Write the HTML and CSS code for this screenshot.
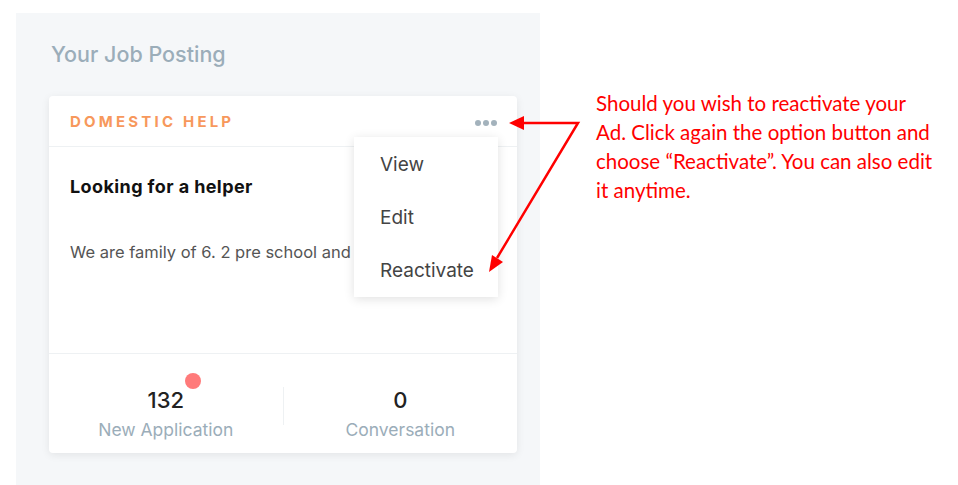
FILE: index.html
```html
<!DOCTYPE html>
<html lang="en">
<head>
    <meta charset="UTF-8">
    <meta name="viewport" content="width=device-width, initial-scale=1.0">
    <title>Your Job Posting</title>
    <link rel="stylesheet" href="styles.css">
</head>
<body>
    <div class="page">
        <section class="panel">
            <h2 class="panel-title">Your Job Posting</h2>

            <div class="card">
                <div class="card-header">
                    <span class="category">DOMESTIC HELP</span>
                    <button class="more-btn" aria-label="Options">
                        <span></span><span></span><span></span>
                    </button>
                </div>

                <div class="card-body">
                    <h3 class="job-title">Looking for a helper</h3>
                    <p class="job-desc">We are family of 6. 2 pre school and 2 kids</p>
                </div>

                <div class="card-stats">
                    <div class="stat">
                        <div class="stat-value">132<span class="badge"></span></div>
                        <div class="stat-label">New Application</div>
                    </div>
                    <div class="stat">
                        <div class="stat-value">0</div>
                        <div class="stat-label">Conversation</div>
                    </div>
                </div>

                <ul class="menu">
                    <li class="menu-item">View</li>
                    <li class="menu-item">Edit</li>
                    <li class="menu-item">Reactivate</li>
                </ul>
            </div>
        </section>

        <div class="note">
            Should you wish to reactivate your<br>
            Ad. Click again the option button and<br>
            choose “Reactivate”. You can also edit<br>
            it anytime.
        </div>
    </div>

    <!-- annotation arrows -->
    <svg class="arrows" width="958" height="485" viewBox="0 0 958 485">
        <polyline points="522,123 578,123 497,258" fill="none" stroke="#ff0000" stroke-width="2.5"/>
        <polygon points="509,123 524,116 524,130" fill="#ff0000"/>
        <polygon points="489,272 492,255 503,262" fill="#ff0000"/>
    </svg>
</body>
</html>
```

FILE: styles.css
```css
* {
    margin: 0;
    padding: 0;
    box-sizing: border-box;
}

body {
    font-family: 'Inter', 'Noto Sans', sans-serif;
    background: #ffffff;
    color: #222222;
}

.page {
    display: flex;
    align-items: flex-start;
    padding: 13px 0 0 16px;
    height: 485px;
}

.panel {
    width: 524px;
    height: 472px;
    background: #f5f7f9;
    padding: 28px 23px 0 33px;
}

.panel-title {
    font-size: 21.5px;
    line-height: 26px;
    font-weight: 500;
    color: #9badb9;
    padding-left: 2px;
    margin-bottom: 29px;
}

.card {
    position: relative;
    width: 468px;
    background: #ffffff;
    border-radius: 4px;
    box-shadow: 0 2px 8px rgba(0, 0, 0, 0.08);
}

.card-header {
    display: flex;
    justify-content: space-between;
    align-items: center;
    height: 51px;
    padding: 0 20px 0 21px;
    border-bottom: 1px solid #eef1f3;
}

.category {
    font-size: 15px;
    font-weight: 700;
    letter-spacing: 3.2px;
    color: #f7985c;
}

.more-btn {
    display: flex;
    gap: 2px;
    border: none;
    background: none;
    padding-top: 4px;
}

.more-btn span {
    width: 6px;
    height: 6px;
    border-radius: 50%;
    background: #a3b2bc;
}

.card-body {
    height: 207px;
    padding: 29px 21px 0;
    border-bottom: 1px solid #eef1f3;
}

.job-title {
    font-size: 18px;
    line-height: 22px;
    font-weight: 700;
    letter-spacing: 0.4px;
    color: #111111;
    margin-bottom: 44px;
}

.job-desc {
    font-size: 16.5px;
    line-height: 20px;
    color: #555555;
    white-space: nowrap;
}

.card-stats {
    display: flex;
    height: 99px;
    padding-top: 33px;
}

.stat {
    flex: 1;
    display: flex;
    flex-direction: column;
    align-items: center;
}

.stat + .stat {
    border-left: 1px solid #eef1f3;
    height: 38px;
}

.stat-value {
    position: relative;
    font-size: 22px;
    font-weight: 500;
    color: #222222;
    line-height: 26px;
}

.stat-label {
    font-size: 17.5px;
    line-height: 21px;
    color: #9badb9;
    margin-top: 6px;
}

.badge {
    position: absolute;
    top: -14px;
    right: -17px;
    width: 16px;
    height: 16px;
    border-radius: 50%;
    background: #ff7a7a;
}

.menu {
    position: absolute;
    top: 41px;
    right: 19px;
    width: 144px;
    list-style: none;
    background: #ffffff;
    box-shadow: 0 2px 10px rgba(0, 0, 0, 0.12);
    padding: 1px 0 0;
}

.menu-item {
    height: 53px;
    line-height: 53px;
    padding-left: 26px;
    font-size: 19px;
    color: #444444;
}

.note {
    margin: 76px 0 0 56px;
    font-family: 'Lato', 'Liberation Sans', sans-serif;
    font-size: 20.5px;
    line-height: 29px;
    color: #ff0000;
    white-space: nowrap;
}

.arrows {
    position: absolute;
    top: 0;
    left: 0;
    pointer-events: none;
}
```
